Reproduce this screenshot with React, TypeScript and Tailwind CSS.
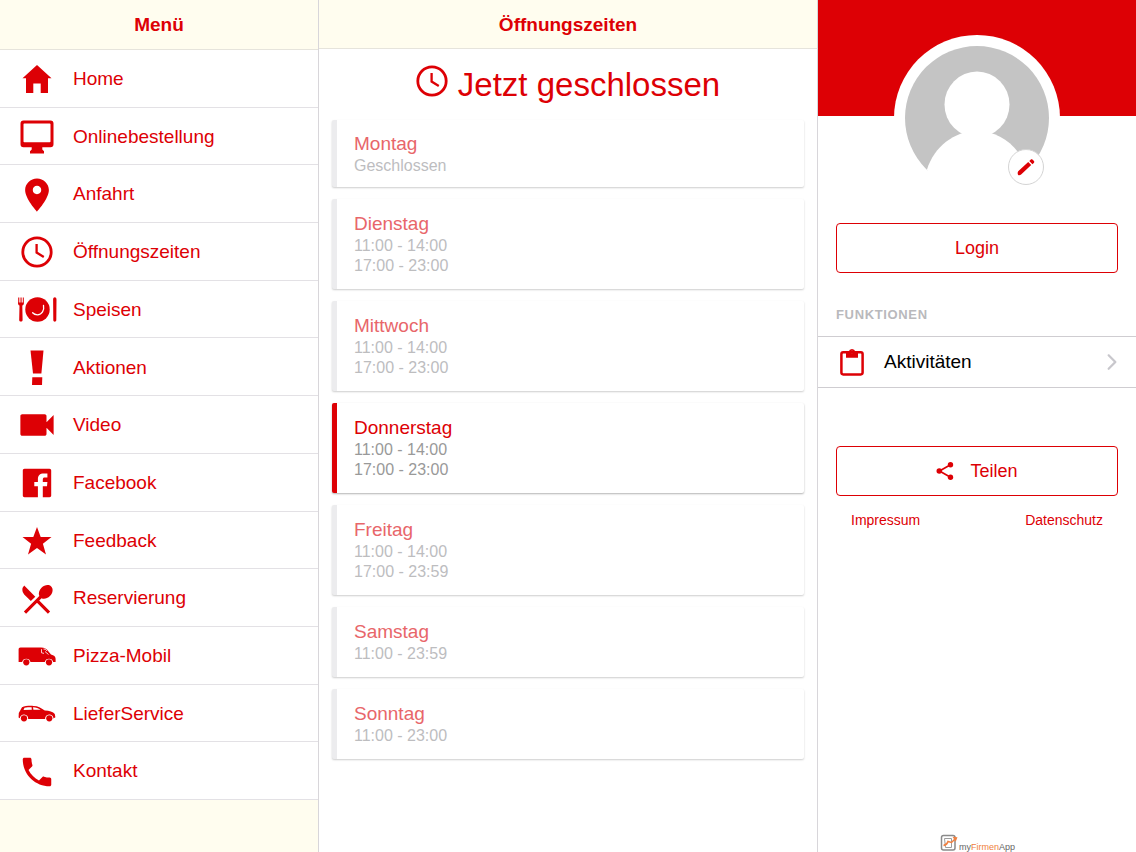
import type { ReactNode } from 'react'
import { IoIosArrowForward, IoMdCall, IoMdPin, IoMdVideocam } from 'react-icons/io'
import { MdRestaurantMenu } from 'react-icons/md'

interface MenuEntry {
  label: string
  icon: ReactNode
}

interface OpeningDay {
  day: string
  hours: string[]
  today?: boolean
}

function HomeIcon() {
  return (
    <svg viewBox="0 0 30 30" className="size-[30px]" fill="currentColor" aria-hidden="true">
      <path d="M15 1 29.500 14.300H26V29h-7.300V19.500h-7.400V29H4V14.300H.5z" />
    </svg>
  )
}

function DesktopIcon() {
  return (
    <svg viewBox="0 0 34 34" className="size-[34px]" fill="currentColor" aria-hidden="true">
      <path
        fillRule="evenodd"
        d="M3.500.5h27a3 3 0 0 1 3 3v20.800a3 3 0 0 1-3 3h-8.200v2.200l1.700 1.800v2.200H10v-2.200l1.700-1.800v-2.200H3.500a3 3 0 0 1-3-3V3.500a3 3 0 0 1 3-3zM4.300 3.400a.8.8 0 0 0-.8.8v17.200a.8.8 0 0 0 .8.8h25.400a.8.8 0 0 0 .8-.8V4.200a.8.8 0 0 0-.8-.8z"
      />
    </svg>
  )
}

function ClockIcon() {
  return (
    <svg viewBox="0 0 32 32" className="size-8" fill="none" stroke="currentColor" aria-hidden="true">
      <circle cx="16" cy="16" r="14.200" strokeWidth="2.800" />
      <path d="M15.600 8v8.600l7.200 4.300" strokeWidth="2.300" />
    </svg>
  )
}

function PlateIcon() {
  return (
    <svg viewBox="0 0 40 28" className="h-7 w-10" fill="currentColor" aria-hidden="true">
      <circle cx="20.500" cy="13.500" r="12.200" />
      <path d="M26.500 9.500c1 4.800-1.600 9.200-6 9.300-2.100 0-3.700-.7-4.900-2" fill="none" stroke="#fff" strokeWidth="1.300" strokeLinecap="round" />
      <path d="M1 1.500v5.700c0 1.200.7 1.900 1.500 2.200L2.200 24c0 2 3.400 2 3.400 0l-.3-14.600c.9-.3 1.600-1 1.600-2.200V1.500h-.8v5h-.9v-5h-.8v5h-.9v-5h-.8v5H1.800v-5z" />
      <path d="M36.100 3.200c0-2.600 3.400-2.900 3.400.3l-.2 20.700c-.1 1.900-3 1.900-3 0z" />
    </svg>
  )
}

function ExclamationIcon() {
  return (
    <svg viewBox="0 0 14 36" className="h-9 w-3.5" fill="currentColor" aria-hidden="true">
      <path d="M.5.5h13L11.400 23.500H3z" />
      <path d="M2.300 27.200h10L12 35H2z" />
    </svg>
  )
}

function FacebookIcon() {
  return (
    <svg viewBox="0 0 30 30" className="size-[30px]" fill="currentColor" aria-hidden="true">
      <path d="M2.500.8h25c1 0 1.700.7 1.700 1.700v25c0 1-.7 1.700-1.700 1.700h-6.700V18.200h4.200l.4-4.200h-4.600v-2.200c0-1.600.6-2.200 2-2.200h2.600V5.500h-3.600c-4 0-5.900 2-5.900 5.600V14h-3.600v4.200h3.600v11H2.500c-1 0-1.700-.7-1.700-1.700v-25c0-1 .7-1.700 1.700-1.700z" />
    </svg>
  )
}

function StarIcon() {
  return (
    <svg viewBox="0 0 30 30" className="size-[30px]" fill="currentColor" aria-hidden="true">
      <path d="m15 1 3.700 10h10.800l-8.600 6.700L24 28.500l-9-6.400-9 6.400 3.100-10.800L.5 11h10.800z" />
    </svg>
  )
}

function VanIcon() {
  return (
    <svg viewBox="0 0 38 20" className="h-5 w-[38px]" fill="currentColor" aria-hidden="true">
      <path d="M2.500 1.500H23c3.500.1 5.600 1.300 7.300 3.700l2.700 3.400c3 .8 4.500 2 4.600 4.200v3.300h-2.400a4.300 4.300 0 0 0-8.400 0H12.500a4.300 4.300 0 0 0-8.400 0H.6V3.500c0-1.300.6-2 1.900-2z" />
      <circle cx="8.300" cy="16.300" r="3.100" />
      <circle cx="31" cy="16.300" r="3.100" />
      <path d="M23.500 3.200v3.600l2.500.6M25.500 3l2.200.4 1.300 1.600M27 5.500l3.500 3" fill="none" stroke="#fff" strokeWidth=".8" />
    </svg>
  )
}

function CarIcon() {
  return (
    <svg viewBox="0 0 38 18" className="h-[18px] w-[38px]" fill="currentColor" aria-hidden="true">
      <path d="M4 2.200C7 .9 11 .7 15.500.9c4.600.1 7.300 1.700 11.300 4.500 4.500.2 8.300 1.100 10 3.600l.6 3.300-1.900 1.100a4.200 4.200 0 0 0-8.400.5H10.200a4.200 4.200 0 0 0-8.400-.6L.6 12.500.8 8z" />
      <circle cx="6" cy="13.300" r="3.100" />
      <circle cx="31.300" cy="13.300" r="3.100" />
      <path d="M6.500 2.700 5.500 5l8.300-.2-.2-2.600c-2.600 0-5 .1-7.100.5zM15 2.200l.4 2.600 7.200-.1c-2.200-1.600-4.500-2.400-7.600-2.500z" fill="#fff" />
    </svg>
  )
}

function PencilIcon() {
  return (
    <svg viewBox="0 0 20 20" className="size-5" fill="currentColor" aria-hidden="true">
      <path d="M2.200 14.200 12.200 5l3 3.100-9.800 9.200c-1 .9-2.400 1.100-3.200.7-.6-.9-.8-2.700 0-3.800z" />
      <path d="m13.300 3.900 1.300-1.200c.7-.7 1.600-.6 2.200 0l1.100 1.200c.6.7.5 1.500-.1 2.100L16.400 7.200z" />
    </svg>
  )
}

function ClipboardIcon() {
  return (
    <svg viewBox="0 0 24 28" className="h-7 w-6" aria-hidden="true">
      <rect x="1.400" y="4.200" width="21.200" height="22.200" rx="1.800" fill="none" stroke="currentColor" strokeWidth="2.500" />
      <path
        fillRule="evenodd"
        fill="currentColor"
        d="M6 9.800V3.500h2.700a3.400 3.400 0 0 1 6.600 0H18v6.300zM12 2.800a1.200 1.200 0 1 0 0 2.400 1.200 1.200 0 0 0 0-2.400z"
      />
    </svg>
  )
}

function ShareIcon() {
  return (
    <svg viewBox="0 0 18 20" className="h-5 w-[18px]" fill="currentColor" aria-hidden="true">
      <path d="M14.500 3.800 3.500 10l11 6.200" fill="none" stroke="currentColor" strokeWidth="1.700" />
      <circle cx="3.300" cy="10" r="2.800" />
      <circle cx="14.500" cy="3.800" r="2.700" />
      <circle cx="14.500" cy="16.200" r="2.700" />
    </svg>
  )
}

function AvatarIcon() {
  return (
    <svg viewBox="0 0 166 166" className="size-[166px]" aria-label="Profilbild" role="img">
      <circle cx="83" cy="83" r="83" fill="#fff" />
      <circle cx="83" cy="83" r="72" fill="#c4c4c4" />
      <ellipse cx="83" cy="69.500" rx="32.500" ry="33" fill="#fff" />
      <path d="M33 134.500C40 112 60 96 83 96s43 16 50 38.500L120 166H46z" fill="#fff" />
    </svg>
  )
}

function FirmenAppLogo() {
  return (
    <svg viewBox="0 0 20 18" className="h-[18px] w-5" fill="none" aria-hidden="true">
      <rect x="2.500" y="1.500" width="13.500" height="14.500" rx="2" stroke="#8a8a8a" strokeWidth="1.500" />
      <path d="M5.500 4.500h7v9h-6z" stroke="#9c9c9c" />
      <path d="M4.500 11.500c2.500-.6 4-1.800 4.500-4l3.500 1 3-3" stroke="#f08040" strokeWidth="1.500" />
      <path d="m13.500 2.800 5 .4-1.800 4.600z" fill="#f08040" />
    </svg>
  )
}

const MENU: MenuEntry[] = [
  { label: 'Home', icon: <HomeIcon /> },
  { label: 'Onlinebestellung', icon: <DesktopIcon /> },
  { label: 'Anfahrt', icon: <IoMdPin className="size-[38px]" /> },
  { label: 'Öffnungszeiten', icon: <ClockIcon /> },
  { label: 'Speisen', icon: <PlateIcon /> },
  { label: 'Aktionen', icon: <ExclamationIcon /> },
  { label: 'Video', icon: <IoMdVideocam className="size-[38px]" /> },
  { label: 'Facebook', icon: <FacebookIcon /> },
  { label: 'Feedback', icon: <StarIcon /> },
  { label: 'Reservierung', icon: <MdRestaurantMenu className="size-[38px]" /> },
  { label: 'Pizza-Mobil', icon: <VanIcon /> },
  { label: 'LieferService', icon: <CarIcon /> },
  { label: 'Kontakt', icon: <IoMdCall className="size-[38px]" /> },
]

const DAYS: OpeningDay[] = [
  { day: 'Montag', hours: ['Geschlossen'] },
  { day: 'Dienstag', hours: ['11:00 - 14:00', '17:00 - 23:00'] },
  { day: 'Mittwoch', hours: ['11:00 - 14:00', '17:00 - 23:00'] },
  { day: 'Donnerstag', hours: ['11:00 - 14:00', '17:00 - 23:00'], today: true },
  { day: 'Freitag', hours: ['11:00 - 14:00', '17:00 - 23:59'] },
  { day: 'Samstag', hours: ['11:00 - 23:59'] },
  { day: 'Sonntag', hours: ['11:00 - 23:00'] },
]

function Sidebar() {
  return (
    <aside className="flex w-[318px] shrink-0 flex-col bg-[#fffdef]">
      <header className="flex h-[50px] items-center justify-center border-b border-[#e6e4dc] pt-0.5">
        <h2 className="text-[19px] font-bold">Menü</h2>
      </header>
      <nav className="grid flex-1 auto-rows-fr bg-white">
        {MENU.map((entry) => (
          <a key={entry.label} href="#" className="flex items-center border-b border-[#e3e1e5] pt-0.5">
            <span className="flex w-[73px] shrink-0 justify-center">{entry.icon}</span>
            <span className="text-[19px]">{entry.label}</span>
          </a>
        ))}
      </nav>
      <div className="h-[52px]" />
    </aside>
  )
}

function DayCard({ day, hours, today }: OpeningDay) {
  return (
    <li
      className={
        today
          ? 'rounded-xs border-l-5 border-[#dd0005] bg-white py-[13px] pl-[17px] shadow-[0_1px_2px_rgba(0,0,0,0.3)]'
          : 'rounded-xs border-l-5 border-[#ececee] bg-white py-[13px] pl-[17px] shadow-[0_1px_2px_rgba(0,0,0,0.2)] first:pt-3 first:pb-[11px]'
      }
    >
      <h3 className={today ? 'text-[19px] leading-6' : 'text-[19px] leading-6 text-[#e8666a]'}>{day}</h3>
      {hours.map((h) => (
        <p key={h} className={today ? 'text-base leading-5 text-[#999]' : 'text-base leading-5 text-[#bdbdbf]'}>
          {h}
        </p>
      ))}
    </li>
  )
}

function OpeningHours() {
  return (
    <main className="min-w-0 flex-1 border-x border-[#d8d6da] bg-white">
      <header className="flex h-[49px] items-center justify-center border-b border-[#e6e4dc] bg-[#fffdef] pt-0.5">
        <h2 className="text-[19px] font-bold">Öffnungszeiten</h2>
      </header>
      <h1 className="flex h-[71px] items-center justify-center gap-2.5 text-[33px]">
        <span className="mb-2">
          <ClockIcon />
        </span>
        Jetzt geschlossen
      </h1>
      <ul className="flex flex-col gap-3 px-[13px]">
        {DAYS.map((d) => (
          <DayCard key={d.day} {...d} />
        ))}
      </ul>
    </main>
  )
}

function Profile() {
  return (
    <aside className="flex w-[318px] shrink-0 flex-col bg-white">
      <div className="flex h-[116px] justify-center bg-[#dd0005] pt-[35px]">
        <div className="relative size-[166px]">
          <AvatarIcon />
          <button
            aria-label="Profil bearbeiten"
            className="absolute right-4 bottom-4 flex size-9 items-center justify-center rounded-full border border-[#d4d4d4] bg-white"
          >
            <PencilIcon />
          </button>
        </div>
      </div>

      <div className="px-[18px] pt-[107px]">
        <button className="h-[50px] w-full rounded border border-[#dd0005] text-lg">Login</button>
      </div>

      <h3 className="px-[18px] pt-8 pb-[11px] text-[13px] leading-5 font-bold tracking-wider text-[#b9b9bc]">FUNKTIONEN</h3>
      <a href="#" className="flex h-[52px] items-center border-y border-[#cfcdd1] pr-3 pl-[22px]">
        <ClipboardIcon />
        <span className="ml-5 flex-1 text-[19px] text-black">Aktivitäten</span>
        <IoIosArrowForward className="size-6 text-[#c8c7cc]" />
      </a>

      <div className="px-[18px] pt-[58px]">
        <button className="flex h-[50px] w-full items-center justify-center gap-4 rounded border border-[#dd0005] text-lg">
          <ShareIcon />
          Teilen
        </button>
      </div>
      <div className="flex justify-between px-[33px] pt-3.5 text-sm">
        <a href="#">Impressum</a>
        <a href="#">Datenschutz</a>
      </div>

      <footer className="mt-auto flex items-end justify-center text-[9px] leading-[10px] text-[#666]">
        <FirmenAppLogo />
        <span>
          my<span className="text-[#f08040]">Firmen</span>App
        </span>
      </footer>
    </aside>
  )
}

export default function App() {
  return (
    <div className="flex min-h-screen bg-white font-['Liberation_Sans',Arial,sans-serif] text-[#dd0005]">
      <Sidebar />
      <OpeningHours />
      <Profile />
    </div>
  )
}
